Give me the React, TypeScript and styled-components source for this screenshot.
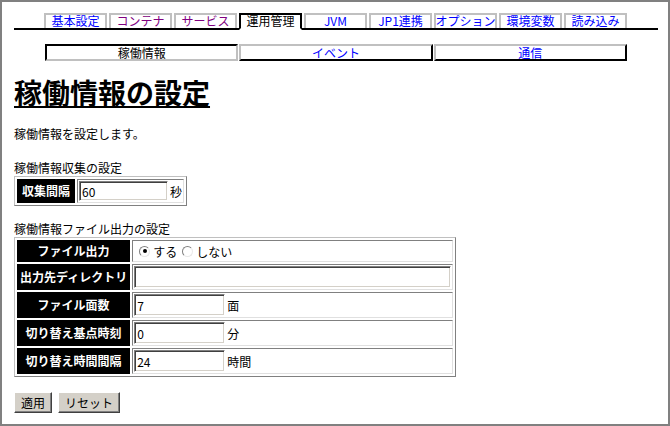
import React, { FC } from 'react'
import styled, { createGlobalStyle } from 'styled-components'

const GlobalStyle = createGlobalStyle`
  html, body {
    margin: 0;
    padding: 0;
    background: #fff;
  }
  body {
    font-family: "Noto Sans CJK JP", "Liberation Sans", sans-serif;
    font-size: 12px;
    color: #000;
  }
`

const Frame = styled.div`
  width: 670px;
  height: 426px;
  box-sizing: border-box;
  border: 2px solid #808080;
  padding: 11px 10px 0 12px;
  overflow: hidden;
`

const TabBar = styled.div`
  display: flex;
  align-items: flex-end;
  gap: 2px;
  padding-left: 30px;
  border-bottom: 2px solid #000;
  height: 15px;
`

const Tab = styled.div<{ $active?: boolean; $visited?: boolean }>`
  box-sizing: border-box;
  width: 63px;
  height: ${(p) => (p.$active ? '17px' : '15px')};
  margin-bottom: ${(p) => (p.$active ? '-2px' : '0')};
  border-top: 2px solid ${(p) => (p.$active ? '#000' : '#c0c0c0')};
  border-left: 2px solid ${(p) => (p.$active ? '#000' : '#c0c0c0')};
  border-right: 2px solid ${(p) => (p.$active ? '#000' : '#c0c0c0')};
  border-bottom: ${(p) => (p.$active ? '2px solid #fff' : '0')};
  background: #fff;
  display: flex;
  align-items: flex-start;
  justify-content: center;
  overflow: hidden;
  font-size: 12px;
  line-height: 12px;
  white-space: nowrap;
  cursor: pointer;
  color: ${(p) => (p.$active ? '#000' : p.$visited ? '#800080' : '#0000ff')};
`

const SubTabBar = styled.div`
  display: flex;
  gap: 1px;
  width: 582px;
  margin: 14px 0 0 31px;
`

const SubTab = styled.div<{ $active?: boolean }>`
  flex: 1;
  box-sizing: border-box;
  height: 17px;
  border: 2px solid;
  border-color: ${(p) =>
    p.$active ? '#000 #c0c0c0 #c0c0c0 #000' : '#c0c0c0 #000 #000 #c0c0c0'};
  display: flex;
  align-items: center;
  justify-content: center;
  overflow: hidden;
  font-size: 12px;
  line-height: 1;
  cursor: pointer;
  color: ${(p) => (p.$active ? '#000' : '#0000ff')};
`

const Heading = styled.h1`
  margin: 15px 0 0;
  font-size: 28px;
  line-height: 32px;
  font-weight: bold;
  text-decoration: underline;
  text-underline-offset: 2px;
`

const Paragraph = styled.p<{ $top: number }>`
  margin: ${(p) => p.$top}px 0 0;
  line-height: 16px;
`

const FormTable = styled.table<{ $width?: number }>`
  width: ${(p) => (p.$width ? `${p.$width}px` : 'auto')};
  border: 1px solid;
  border-color: #c0c0c0 #808080 #808080 #c0c0c0;
  border-spacing: 2px;
  border-collapse: separate;
`

const LabelCell = styled.th<{ $padX?: number }>`
  width: 1px;
  background: #000;
  color: #fff;
  font-weight: bold;
  font-size: 12px;
  line-height: 14px;
  white-space: nowrap;
  text-align: center;
  border: 1px solid #000;
  padding: 1px ${(p) => p.$padX ?? 2}px;
`

const ValueCell = styled.td`
  border: 1px solid;
  border-color: #808080 #e0e0e0 #e0e0e0 #808080;
  padding: 1px;
  white-space: nowrap;
`

const Field = styled.div<{ $height: number }>`
  display: flex;
  align-items: center;
  gap: 2px;
  height: ${(p) => p.$height}px;
`

const TextInput = styled.input<{ $width: number; $height: number }>`
  box-sizing: border-box;
  width: ${(p) => p.$width}px;
  height: ${(p) => p.$height}px;
  margin: 0;
  padding: 0 2px;
  font-family: "Noto Sans CJK JP", "Liberation Sans", sans-serif;
  font-size: 12px;
  color: #000;
  background: #fff;
  border: 1px solid;
  border-color: #808080 #fff #fff #808080;
  box-shadow: inset 1px 1px 0 #404040, inset -1px -1px 0 #d4d0c8;
  outline: none;
`

const RadioMark = styled.span<{ $checked?: boolean }>`
  box-sizing: border-box;
  width: 11px;
  height: 11px;
  border-radius: 50%;
  border: 1px solid;
  border-color: #808080 #e8e8e8 #e8e8e8 #808080;
  background: #fff;
  display: inline-flex;
  align-items: center;
  justify-content: center;
  &::after {
    content: '';
    width: 4px;
    height: 4px;
    border-radius: 50%;
    background: ${(p) => (p.$checked ? '#000' : 'transparent')};
  }
`

const RadioLabel = styled.span`
  margin: 0 3px 0 1px;
`

const Spacer = styled.span`
  width: 3px;
`

const ButtonRow = styled.div`
  display: flex;
  gap: 6px;
  margin-top: 15px;
`

const Button = styled.button`
  box-sizing: border-box;
  height: 21px;
  padding: 0 6px;
  font-family: "Noto Sans CJK JP", "Liberation Sans", sans-serif;
  font-size: 12px;
  color: #000;
  background: #d4d0c8;
  border: 1px solid;
  border-color: #fff #404040 #404040 #fff;
  box-shadow: inset -1px -1px 0 #808080;
`

const tabs = [
  { label: '基本設定' },
  { label: 'コンテナ', visited: true },
  { label: 'サービス', visited: true },
  { label: '運用管理', active: true },
  { label: 'JVM' },
  { label: 'JP1連携' },
  { label: 'オプション' },
  { label: '環境変数' },
  { label: '読み込み' },
]

const subTabs = [
  { label: '稼働情報', active: true },
  { label: 'イベント' },
  { label: '通信' },
]

const fileRows = [
  { label: '出力先ディレクトリ', value: '', width: 317, unit: '' },
  { label: 'ファイル面数', value: '7', width: 91, unit: '面' },
  { label: '切り替え基点時刻', value: '0', width: 91, unit: '分' },
  { label: '切り替え時間間隔', value: '24', width: 91, unit: '時間' },
]

const App: FC = () => {
  return (
    <Frame>
      <GlobalStyle />
      <TabBar>
        {tabs.map((t) => (
          <Tab key={t.label} $active={t.active} $visited={t.visited}>
            {t.label}
          </Tab>
        ))}
      </TabBar>
      <SubTabBar>
        {subTabs.map((t) => (
          <SubTab key={t.label} $active={t.active}>
            {t.label}
          </SubTab>
        ))}
      </SubTabBar>

      <Heading>稼働情報の設定</Heading>
      <Paragraph $top={18}>稼働情報を設定します。</Paragraph>

      <Paragraph $top={18}>稼働情報収集の設定</Paragraph>
      <FormTable>
        <tbody>
          <tr>
            <LabelCell $padX={4}>収集間隔</LabelCell>
            <ValueCell>
              <Field $height={20}>
                <TextInput $width={89} $height={20} defaultValue="60" />
                <span>秒</span>
              </Field>
            </ValueCell>
          </tr>
        </tbody>
      </FormTable>

      <Paragraph $top={15}>稼働情報ファイル出力の設定</Paragraph>
      <FormTable $width={440}>
        <tbody>
          <tr>
            <LabelCell>ファイル出力</LabelCell>
            <ValueCell>
              <Field $height={18}>
                <Spacer />
                <RadioMark $checked />
                <RadioLabel>する</RadioLabel>
                <RadioMark />
                <RadioLabel>しない</RadioLabel>
              </Field>
            </ValueCell>
          </tr>
          {fileRows.map((r) => (
            <tr key={r.label}>
              <LabelCell>{r.label}</LabelCell>
              <ValueCell>
                <Field $height={22}>
                  <TextInput $width={r.width} $height={22} defaultValue={r.value} />
                  {r.unit && <span>{r.unit}</span>}
                </Field>
              </ValueCell>
            </tr>
          ))}
        </tbody>
      </FormTable>

      <ButtonRow>
        <Button>適用</Button>
        <Button>リセット</Button>
      </ButtonRow>
    </Frame>
  )
}

export default App
